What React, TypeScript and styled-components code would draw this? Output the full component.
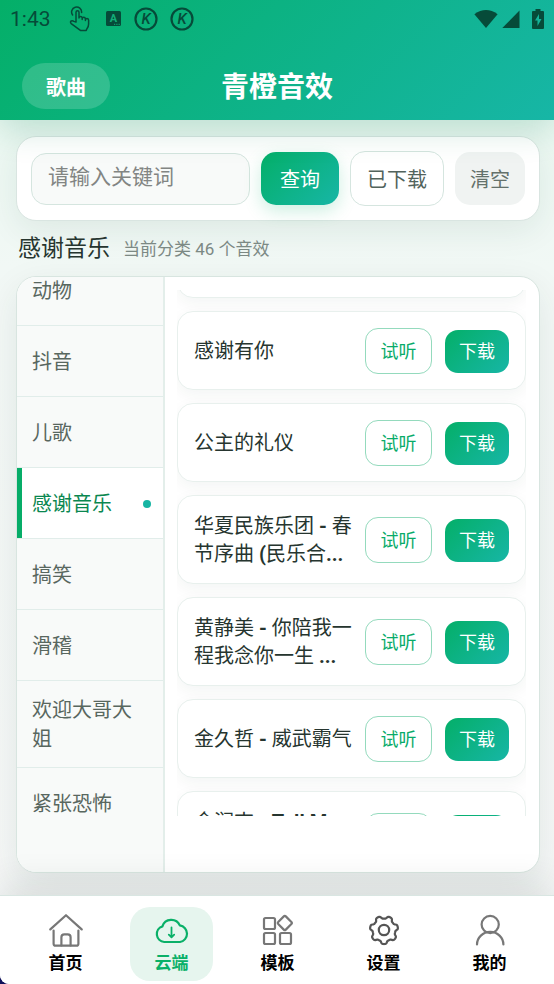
import React, { useLayoutEffect, useRef } from "react";
import styled, { createGlobalStyle, css } from "styled-components";

const brand = "linear-gradient(135deg, #04af68 0%, #17b6a6 100%)";
const ink = "#064b39";

const GlobalStyle = createGlobalStyle`
  * { box-sizing: border-box; }
  body {
    margin: 0;
    background: #10105a;
    font-family: Roboto, "Noto Sans CJK SC", sans-serif;
    color: #26352f;
  }
  button, input { font-family: inherit; margin: 0; }
`;

const Page = styled.div`
  display: flex;
  flex-direction: column;
  height: 100vh;
  overflow: hidden;
  border-bottom-left-radius: 9px;
  background: linear-gradient(180deg, #e6f8ef 0%, #f3f8f6 32%, #f6f7f7 100%);
`;

const Header = styled.header`
  position: relative;
  z-index: 2;
  flex: none;
  padding-bottom: 11px;
  background: ${brand};
  box-shadow: 0 10px 32px rgba(4, 125, 78, 0.2);
`;

const StatusBar = styled.div`
  display: flex;
  align-items: center;
  justify-content: space-between;
  height: 38px;
  padding: 0 10px;
  color: ${ink};
`;

const StatusGroup = styled.div<{ $gap: number }>`
  display: flex;
  align-items: center;
  gap: ${(p) => p.$gap}px;
  svg { display: block; }
`;

const Clock = styled.time`
  margin-right: 5px;
  font-size: 21px;
  line-height: 24px;
`;

const BatterySlot = styled.span`
  padding-left: 8px;
`;

const TitleRow = styled.div`
  display: grid;
  grid-template-columns: 1fr auto 1fr;
  align-items: center;
  padding: 25px 22px 0;
`;

const SongsButton = styled.button`
  justify-self: start;
  height: 46px;
  padding: 0 24px;
  border: 0;
  border-radius: 23px;
  background: rgba(255, 255, 255, 0.17);
  color: #fff;
  font-size: 20px;
  font-weight: 700;
`;

const Title = styled.h1`
  margin: 0;
  padding-top: 4px;
  color: #fff;
  font-size: 28px;
  line-height: 40px;
  font-weight: 700;
`;

const Main = styled.main`
  display: flex;
  flex: 1;
  flex-direction: column;
  min-height: 0;
  padding: 16px 14px 22px 16px;
`;

const SearchCard = styled.form`
  display: flex;
  align-items: center;
  gap: 11px;
  height: 85px;
  padding: 0 14px;
  border: 1px solid #d9e5e1;
  border-radius: 20px;
  background: #fff;
  box-shadow: 0 10px 32px rgba(20, 60, 45, 0.08);
`;

const SearchInput = styled.input`
  flex: 1;
  min-width: 0;
  height: 52px;
  padding: 0 16px 3px;
  border: 1px solid #d5e5df;
  border-radius: 15px;
  background: #f8faf9;
  color: #26352f;
  font-size: 21px;
  outline: none;
  &::placeholder { color: #828583; opacity: 1; }
`;

const buttonTones = {
  primary: css`
    height: 53px;
    padding: 0 19px;
    background: ${brand};
    color: #fff;
    box-shadow: 0 6px 18px rgba(5, 174, 105, 0.2);
  `,
  outline: css`
    height: 55px;
    padding: 0 16px;
    border: 1px solid #d5e5df;
    background: #fff;
    color: #52635c;
  `,
  muted: css`
    height: 53px;
    padding: 0 15px;
    background: #f0f3f2;
    color: #64716b;
  `,
};

const SearchButton = styled.button<{ $tone: keyof typeof buttonTones }>`
  flex: none;
  border: 0;
  border-radius: 15px;
  font-size: 20px;
  ${(p) => buttonTones[p.$tone]}
`;

const SectionHead = styled.div`
  display: flex;
  align-items: center;
  gap: 13px;
  height: 55px;
  padding: 0 2px;
`;

const SectionTitle = styled.h2`
  margin: 0;
  font-size: 23px;
  line-height: 32px;
  font-weight: 400;
`;

const SectionNote = styled.span`
  color: #7c8984;
  font-size: 17px;
  line-height: 24px;
`;

const Panel = styled.section`
  display: grid;
  flex: 1;
  grid-template-columns: 148px minmax(0, 1fr);
  min-height: 0;
  overflow: hidden;
  border: 1px solid #d8e5e0;
  border-radius: 20px;
  background: #fff;
  box-shadow: 0 12px 36px rgba(20, 50, 40, 0.09);
`;

const Sidebar = styled.nav`
  display: flex;
  min-height: 0;
  padding-bottom: 56px;
  border-right: 2px solid #e3eeea;
  background: #f8faf9;
`;

const CategoryList = styled.div`
  flex: 1;
  overflow-y: auto;
  scrollbar-width: none;
`;

const Category = styled.button<{ $active: boolean }>`
  display: flex;
  align-items: center;
  justify-content: space-between;
  width: 100%;
  min-height: 71px;
  padding: 15px 12px 13px 15px;
  border: 0;
  border-bottom: 1px solid #e1edea;
  background: ${(p) => (p.$active ? "#fff" : "transparent")};
  box-shadow: ${(p) => (p.$active ? "inset 5px 0 #06ad68" : "none")};
  color: ${(p) => (p.$active ? "#0a8750" : "#58675f")};
  font-size: 20px;
  line-height: 29px;
  text-align: left;
`;

const Dot = styled.span`
  width: 8px;
  height: 8px;
  border-radius: 50%;
  background: #17b5a3;
`;

const Results = styled.div`
  display: flex;
  min-height: 0;
  padding: 13px 13px 56px 12px;
`;

const SoundList = styled.ul`
  flex: 1;
  min-width: 0;
  margin: 0;
  padding: 0;
  overflow-y: auto;
  scrollbar-width: none;
  list-style: none;
`;

const SoundCard = styled.li`
  display: flex;
  align-items: center;
  gap: 9px;
  min-height: 79px;
  margin-bottom: 13px;
  padding: 16px 16px 15px;
  border: 1px solid #e8f0ed;
  border-radius: 16px;
  background: #fff;
  box-shadow: 0 5px 16px rgba(20, 50, 40, 0.05);
`;

const SoundName = styled.span`
  flex: 1;
  min-width: 0;
  font-size: 20px;
  line-height: 28px;
`;

const Latin = styled.span`
  font-weight: 700;
`;

const SoundActions = styled.div`
  display: flex;
  flex: none;
  align-items: center;
  gap: 13px;
`;

const SoundButton = styled.button<{ $filled?: boolean }>`
  width: ${(p) => (p.$filled ? 64 : 67)}px;
  height: ${(p) => (p.$filled ? 43 : 46)}px;
  padding: 0 0 2px;
  border: ${(p) => (p.$filled ? "0" : "1px solid #94dabd")};
  border-radius: 13px;
  background: ${(p) => (p.$filled ? brand : "#fff")};
  color: ${(p) => (p.$filled ? "#fff" : "#08ab69")};
  font-size: 18px;
`;

const TabBar = styled.nav`
  position: relative;
  z-index: 1;
  display: flex;
  flex: none;
  gap: 23px;
  padding: 11px 23px 3px 24px;
  border-top: 1px solid #d9e6e2;
  background: #fff;
  box-shadow: 0 -10px 36px rgba(20, 50, 40, 0.11);
`;

const Tab = styled.button<{ $active: boolean }>`
  display: flex;
  flex: 1;
  flex-direction: column;
  align-items: center;
  gap: 3px;
  height: 74px;
  padding: 7px 0 0;
  border: 0;
  border-radius: 20px;
  background: ${(p) => (p.$active ? "#e6f5ee" : "transparent")};
  color: ${(p) => (p.$active ? "#0ab068" : "#000")};
  font-size: 17px;
  line-height: 24px;
  font-weight: 700;
`;

const IconSvg = styled.svg`
  display: block;
  fill: none;
  stroke-width: 2.2;
  stroke-linecap: round;
  stroke-linejoin: round;
`;

/* Seven-toothed gear outline, one tooth pointing straight down. */
const gearPath = (() => {
  const steps = 140;
  const points: string[] = [];
  for (let i = 0; i < steps; i++) {
    const a = (i / steps) * Math.PI * 2;
    const wave = Math.tanh(2 * Math.cos(7 * (a - Math.PI / 2)));
    const r = 12.7 + 1.4 * wave;
    points.push(`${(17 + r * Math.cos(a)).toFixed(2)} ${(16 + r * Math.sin(a)).toFixed(2)}`);
  }
  return `M${points.join("L")}Z`;
})();

const HomeIcon = () => (
  <IconSvg width="34" height="34" viewBox="0 0 34 34" stroke="#777">
    <path d="M1.3 15.4 17 1.2 32.7 15.4" />
    <path d="M4.6 16.5v13.2q0 2 2 2h20.8q2 0 2-2V16.5" />
    <path d="M12.4 31.5v-8.3q0-2.9 2.9-2.9h3.4q2.9 0 2.9 2.9v8.3" />
  </IconSvg>
);
const CloudIcon = () => (
  <IconSvg width="34" height="34" viewBox="0 0 34 34" stroke="#0ab068">
    <path d="M9.2 28A8 8 0 0 1 7.4 12.4A9.3 9.3 0 0 1 24.8 11.4A8.4 8.4 0 0 1 25 28Z" />
    <path d="M16.5 13.5v9.5M13.8 20.6l2.7 2.7 2.7-2.7" strokeWidth="1.8" />
  </IconSvg>
);
const GridIcon = () => (
  <IconSvg width="34" height="34" viewBox="0 0 34 34" stroke="#777">
    <rect x="3" y="4" width="11" height="11" rx="1.5" />
    <rect x="3" y="19" width="11" height="11" rx="1.5" />
    <rect x="19" y="19" width="11" height="11" rx="1.5" />
    <path d="M22.8 2.4q1-1 2 0l5.6 5.6q1 1 0 2l-5.6 5.6q-1 1-2 0l-5.6-5.6q-1-1 0-2z" />
  </IconSvg>
);
const GearIcon = () => (
  <IconSvg width="34" height="34" viewBox="0 0 34 34" stroke="#555">
    <path d={gearPath} />
    <circle cx="17" cy="16" r="5.2" />
  </IconSvg>
);
const UserIcon = () => (
  <IconSvg width="34" height="34" viewBox="0 0 34 34" stroke="#777">
    <circle cx="17.2" cy="10.5" r="8.6" />
    <path d="M4 30.5a13.2 12.6 0 0 1 26.4 0" />
  </IconSvg>
);

const TouchIcon = () => (
  <svg width="24" height="26" viewBox="0 0 24 26" fill="none" stroke={ink} strokeWidth="1.5" strokeLinejoin="round" strokeLinecap="round">
    <path d="M4.6 9A5 5 0 1 1 13.6 6.4" />
    <path d="M8 16V6.3q0-1.6 1.5-1.6T11 6.3V12q.2-1.4 1.6-1.4T14.2 12v1.4-.8q.2-1.3 1.6-1.3t1.6 1.5v1.6-.6q.2-1.2 1.6-1.2t1.6 1.6V18q0 3-1.8 5l-.6 1.4h-5.8L3.2 17.6q-1.4-1.8 0-2.6 1.4-.6 2.6.4z" />
  </svg>
);
const LetterIcon = () => (
  <svg width="18" height="18" viewBox="0 0 18 18">
    <rect x="2" y="1" width="15" height="15" rx="1.5" fill={ink} />
    <text x="9.5" y="12" textAnchor="middle" fontFamily="Roboto" fontWeight="700" fontSize="11" fill="#12ae78">A</text>
    <path d="M10 14.3h1.2M12.3 14.3h1.2M14.6 14.3h1.2" stroke="#12ae78" />
  </svg>
);
const CircleKIcon = () => (
  <svg width="24" height="24" viewBox="0 0 24 24">
    <circle cx="12" cy="12" r="10.5" fill="none" stroke={ink} strokeWidth="2.2" />
    <text x="12" y="17" textAnchor="middle" fontFamily="Roboto" fontWeight="500" fontStyle="italic" fontSize="15" fill={ink}>K</text>
  </svg>
);
const WifiIcon = () => (
  <svg width="24" height="20" viewBox="0 0 24 20" fill={ink}>
    <path d="M.4 5.2Q12-3.2 23.6 5.2L12 19z" />
  </svg>
);
const SignalIcon = () => (
  <svg width="18" height="20" viewBox="0 0 18 20" fill={ink}>
    <path d="M17.5 1.5v17.500H.3z" />
  </svg>
);
const BatteryIcon = () => (
  <svg width="12" height="20" viewBox="0 0 12 20">
    <path d="M3.5 0h5v2H11q1 0 1 1v16q0 1-1 1H1q-1 0-1-1V3q0-1 1-1h2.5z" fill={ink} />
    <path d="M7 5 3 11.5h2.5V17l4-7H7z" fill="#14b398" />
  </svg>
);

const categories = ["动物", "抖音", "儿歌", "感谢音乐", "搞笑", "滑稽", "欢迎大哥大姐", "紧张恐怖"];

const sounds = [
  "感谢有你",
  "公主的礼仪",
  "华夏民族乐团 - 春节序曲 (民乐合...",
  "黄静美 - 你陪我一程我念你一生 ...",
  "金久哲 - 威武霸气",
  "金润吉 - Tell Me ...",
];

const tabs = [
  { label: "首页", Icon: HomeIcon },
  { label: "云端", Icon: CloudIcon },
  { label: "模板", Icon: GridIcon },
  { label: "设置", Icon: GearIcon },
  { label: "我的", Icon: UserIcon },
];

function MixedName({ text }: { text: string }) {
  return (
    <SoundName>
      {text.split(/([\x21-\x7e]+)/).map((part, i) => (i % 2 ? <Latin key={i}>{part}</Latin> : part))}
    </SoundName>
  );
}

export default function App() {
  const categoryRef = useRef<HTMLDivElement>(null);
  const soundRef = useRef<HTMLUListElement>(null);

  useLayoutEffect(() => {
    if (categoryRef.current) categoryRef.current.scrollTop = 22;
    if (soundRef.current) soundRef.current.scrollTop = 71;
  }, []);

  return (
    <>
      <GlobalStyle />
      <Page>
        <Header>
          <StatusBar>
            <StatusGroup $gap={12}>
              <Clock>1:43</Clock>
              <TouchIcon />
              <LetterIcon />
              <CircleKIcon />
              <CircleKIcon />
            </StatusGroup>
            <StatusGroup $gap={4}>
              <WifiIcon />
              <SignalIcon />
              <BatterySlot>
                <BatteryIcon />
              </BatterySlot>
            </StatusGroup>
          </StatusBar>
          <TitleRow>
            <SongsButton type="button">歌曲</SongsButton>
            <Title>青橙音效</Title>
          </TitleRow>
        </Header>

        <Main>
          <SearchCard onSubmit={(e) => e.preventDefault()}>
            <SearchInput type="text" placeholder="请输入关键词" aria-label="请输入关键词" />
            <SearchButton type="submit" $tone="primary">查询</SearchButton>
            <SearchButton type="button" $tone="outline">已下载</SearchButton>
            <SearchButton type="reset" $tone="muted">清空</SearchButton>
          </SearchCard>

          <SectionHead>
            <SectionTitle>感谢音乐</SectionTitle>
            <SectionNote>当前分类 46 个音效</SectionNote>
          </SectionHead>

          <Panel>
            <Sidebar>
              <CategoryList ref={categoryRef}>
                {categories.map((name) => (
                  <Category key={name} type="button" $active={name === "感谢音乐"}>
                    {name}
                    {name === "感谢音乐" && <Dot />}
                  </Category>
                ))}
              </CategoryList>
            </Sidebar>
            <Results>
              <SoundList ref={soundRef}>
                <SoundCard />
                {sounds.map((name) => (
                  <SoundCard key={name}>
                    <MixedName text={name} />
                    <SoundActions>
                      <SoundButton type="button">试听</SoundButton>
                      <SoundButton type="button" $filled>下载</SoundButton>
                    </SoundActions>
                  </SoundCard>
                ))}
              </SoundList>
            </Results>
          </Panel>
        </Main>

        <TabBar>
          {tabs.map(({ label, Icon }) => (
            <Tab key={label} type="button" $active={label === "云端"}>
              <Icon />
              {label}
            </Tab>
          ))}
        </TabBar>
      </Page>
    </>
  );
}
